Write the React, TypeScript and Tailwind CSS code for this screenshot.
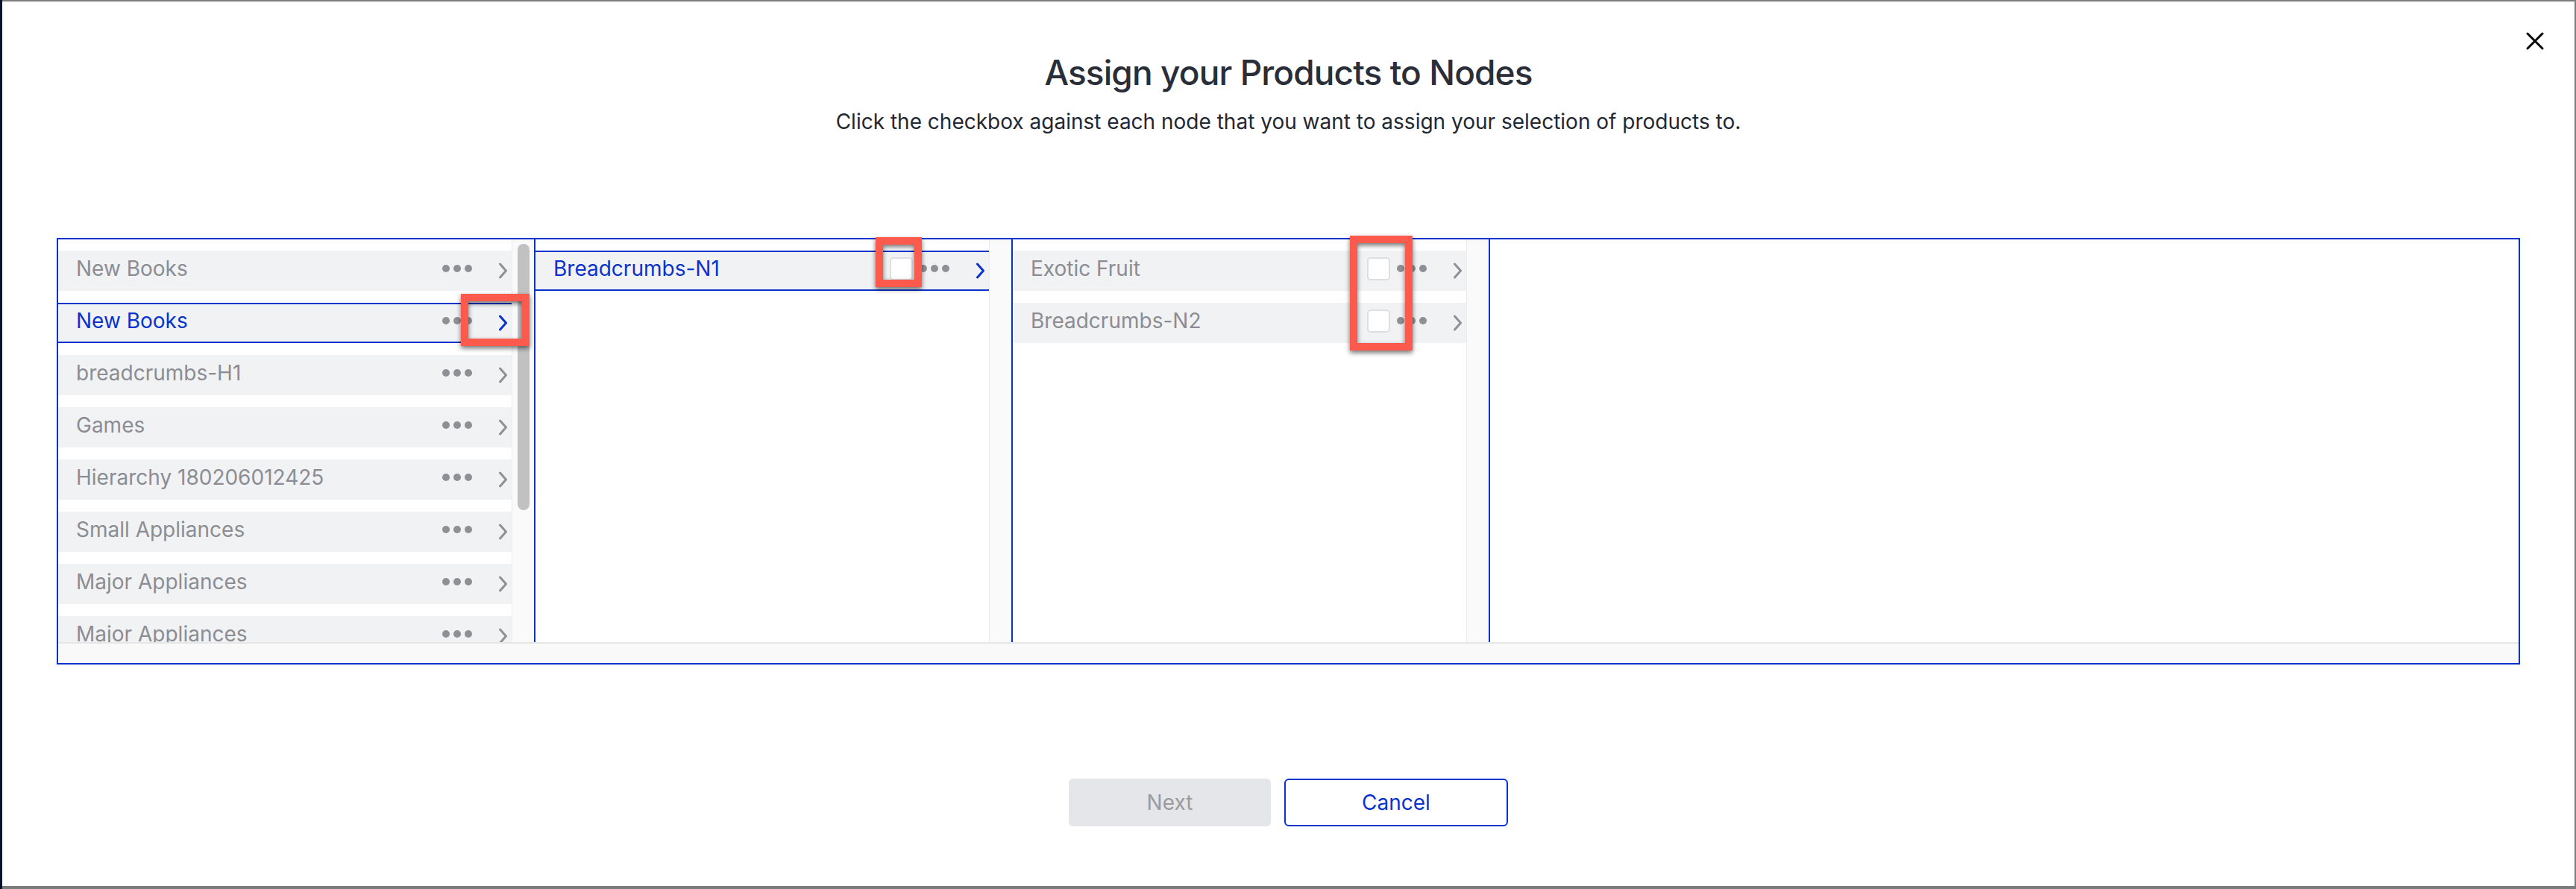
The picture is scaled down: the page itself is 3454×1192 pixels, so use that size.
import React from 'react';

type Row = { label: string; selected?: boolean };

const column1: Row[] = [
  { label: 'New Books' },
  { label: 'New Books', selected: true },
  { label: 'breadcrumbs-H1' },
  { label: 'Games' },
  { label: 'Hierarchy 180206012425' },
  { label: 'Small Appliances' },
  { label: 'Major Appliances' },
  { label: 'Major Appliances' },
];

const column2: Row[] = [{ label: 'Breadcrumbs-N1', selected: true }];

const column3: Row[] = [{ label: 'Exotic Fruit' }, { label: 'Breadcrumbs-N2' }];

const Dots: React.FC = () => (
  <svg width="40" height="10" viewBox="0 0 40 10" className="mt-[-6px] shrink-0">
    <circle cx="5" cy="5" r="5" fill="#8f9095" />
    <circle cx="20" cy="5" r="5" fill="#8f9095" />
    <circle cx="35" cy="5" r="5" fill="#8f9095" />
  </svg>
);

const Chevron: React.FC<{ active?: boolean }> = ({ active }) => (
  <svg width="13" height="22" viewBox="0 0 13 22" className="ml-[35px] shrink-0" fill="none">
    <path
      d="M2.5 2 L10.5 11 L2.5 20"
      stroke={active ? '#0a33cc' : '#8f9095'}
      strokeWidth="3"
      strokeLinecap="round"
      strokeLinejoin="round"
    />
  </svg>
);

const NodeRow: React.FC<{ row: Row; checkbox?: boolean }> = ({ row, checkbox }) => (
  <div
    className={`h-[54px] shrink-0 flex items-center pl-[24px] pr-[5px] bg-[#f1f2f4] ${
      row.selected ? 'border-y-2 border-[#0a33cc]' : ''
    }`}
  >
    <span
      className={`flex-1 mb-[6px] text-[28px] leading-none whitespace-nowrap ${
        row.selected ? 'text-[#0a33cc]' : 'text-[#8b8d93]'
      }`}
    >
      {row.label}
    </span>
    {checkbox && (
      <span className="w-[31px] h-[31px] mr-[9px] mt-[-5px] shrink-0 rounded-[5px] bg-white border-2 border-[#dedfe1]" />
    )}
    <Dots />
    <Chevron active={row.selected} />
  </div>
);

const NodeColumn: React.FC<{ rows: Row[]; checkbox?: boolean; thumb?: boolean }> = ({
  rows,
  checkbox,
  thumb,
}) => (
  <div className="w-[640px] shrink-0 flex border-r-2 border-[#0a33cc]">
    <div className="w-[608px] flex flex-col gap-[16px] pt-[15px] overflow-hidden">
      {rows.map((r, i) => (
        <NodeRow key={i} row={r} checkbox={checkbox} />
      ))}
    </div>
    <div className="w-[30px] border-l border-[#ebebeb] bg-[#fafafa] pl-[7px] pt-[6px]">
      {thumb && <div className="w-[16px] h-[357px] rounded-full bg-[#c1c1c1]" />}
    </div>
  </div>
);

const Annotation: React.FC<{ className: string }> = ({ className }) => (
  <div
    className={`absolute border-[10px] border-[#fd5a4e] drop-shadow-[0_3px_3px_rgba(0,0,0,0.55)] ${className}`}
  />
);

export default function App() {
  return (
    <div className="relative w-[3454px] h-[1192px] bg-[#7c7c7c] border-l-[3px] border-[#07132b] pt-[2px] pr-[2px] pb-[4px] font-['Inter',sans-serif]">
      <div className="relative h-full bg-white flex flex-col items-center pt-[67px]">
        <button className="absolute right-[41px] top-[41px] w-[24px] h-[24px]">
          <svg width="24" height="24" viewBox="0 0 24 24" fill="none">
            <path d="M2 2 L22 22 M22 2 L2 22" stroke="#000" strokeWidth="3" strokeLinecap="round" />
          </svg>
        </button>

        <h1 className="text-[46px] leading-[56px] font-medium tracking-[-0.9px] text-[#2a2e39]">
          Assign your Products to Nodes
        </h1>
        <p className="mt-[18px] text-[28px] leading-[40px] text-[#222833]">
          Click the checkbox against each node that you want to assign your selection of products to.
        </p>

        {/* Column browser */}
        <div className="mt-[136px] self-stretch mx-[73px] h-[572px] border-2 border-[#0a33cc] flex flex-col">
          <div className="flex flex-1 min-h-0">
            <NodeColumn rows={column1} thumb />
            <NodeColumn rows={column2} checkbox />
            <NodeColumn rows={column3} checkbox />
            <div className="flex-1 bg-white" />
          </div>
          <div className="h-[28px] shrink-0 bg-[#f9f9f9] border-t-2 border-[#e6e6e6]" />
        </div>

        {/* Actions */}
        <div className="mt-[153px] flex gap-[18px]">
          <button className="w-[271px] h-[64px] rounded-[6px] bg-[#e5e6e9] text-[28px] text-[#9a9ba0]">
            Next
          </button>
          <button className="w-[300px] h-[64px] rounded-[6px] bg-white border-2 border-[#0a33cc] text-[28px] text-[#0a33cc]">
            Cancel
          </button>
        </div>
      </div>

      <Annotation className="left-[615px] top-[394px] w-[92px] h-[70px]" />
      <Annotation className="left-[1171px] top-[318px] w-[62px] h-[67px]" />
      <Annotation className="left-[1807px] top-[316px] w-[84px] h-[154px]" />
    </div>
  );
}
